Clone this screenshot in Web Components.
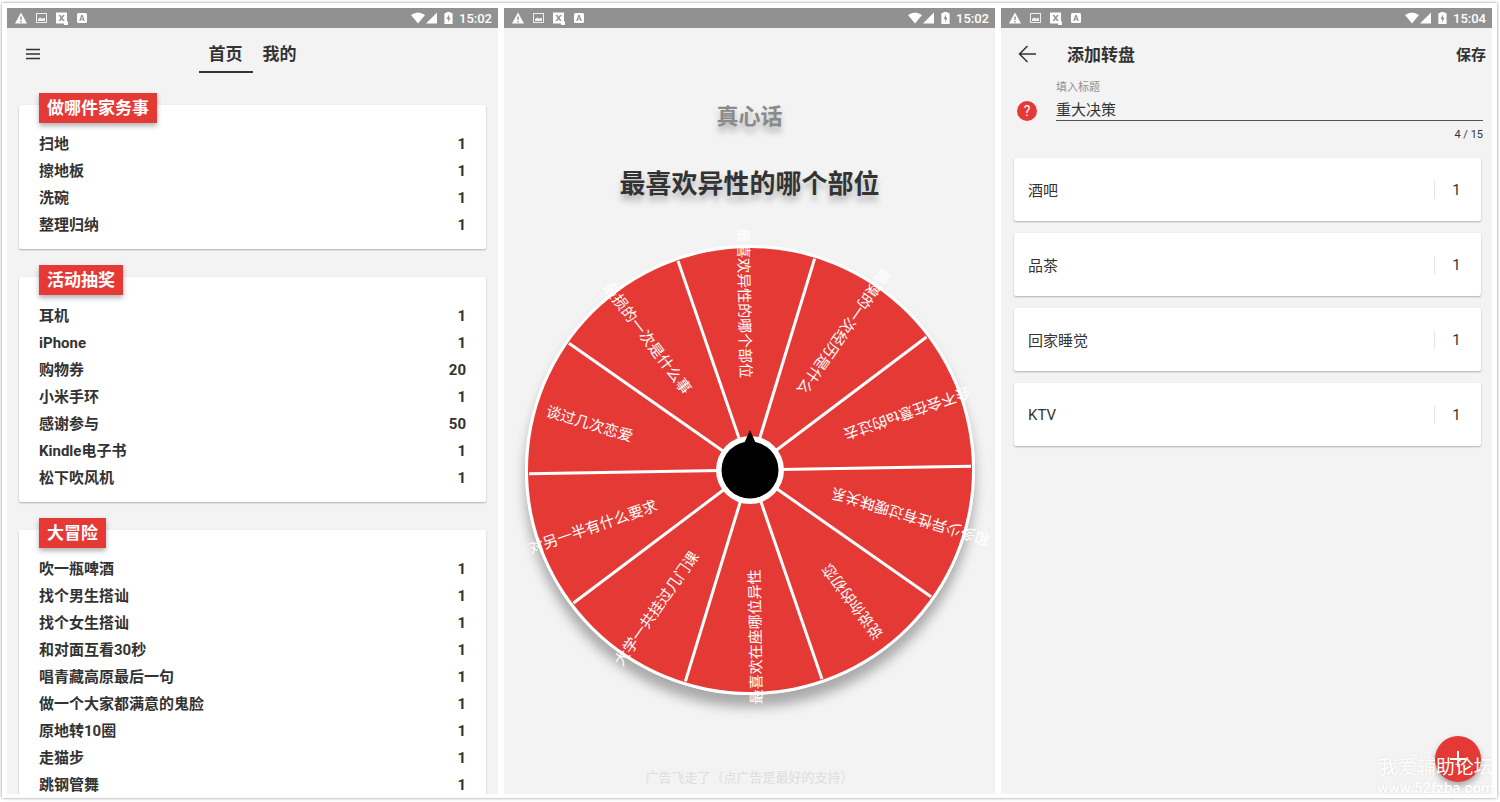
<!DOCTYPE html>
<html lang="zh-CN">
<head>
<meta charset="utf-8">
<title>转盘</title>
<style>
	html {
		height: 100%;
	}

	body {
		margin: 0;
		height: 100%;
		display: flex;
		background: #fff;
		color: #333;
		font-family: Roboto, "Noto Sans CJK SC", sans-serif;
		font-size: 15px;
		--red: #e53935;
		--surface: #f3f3f3;
	}
</style>
</head>
<body>

<template id="screen-board-template">
	<style>
		:host {
			flex: 1;
			display: grid;
			grid-template-columns: repeat(3, minmax(0, 1fr));
			grid-template-rows: minmax(0, 1fr);
			gap: 6px;
			margin: 3px 3px 4px 2px;
			padding: 5px 5px 4px;
			position: relative;
			background: #fff;
			box-shadow: 0 0 3px rgba(0, 0, 0, 0.45);
		}

		.stamp {
			position: absolute;
			right: 3px;
			bottom: 0;
			display: flex;
			flex-direction: column;
			align-items: center;
			color: #fff;
			text-shadow: 0 0 2px rgba(0, 0, 0, 0.1);
			pointer-events: none;
			font-size: 19px;
			line-height: 20px;
		}

		.stamp small {
			font-size: 15px;
			font-weight: 500;
		}
	</style>
	<slot></slot>
	<div class="stamp"><span>我爱辅助论坛</span><small>www.52fzba.com</small></div>
</template>

<template id="status-bar-template">
	<style>
		:host {
			display: flex;
			align-items: center;
			height: 20px;
			padding: 0 6px 0 8px;
			background: #919191;
			color: #fff;
			font-size: 13px;
			font-weight: 500;
			flex: none;
		}

		.notices {
			display: flex;
			align-items: center;
			gap: 9px;
			margin-right: auto;
		}

		.system {
			display: flex;
			align-items: center;
		}

		.battery {
			margin: 0 6px;
		}

		svg {
			display: block;
			fill: #fff;
		}
	</style>
	<div class="notices">
		<svg width="12" height="12" viewBox="0 0 12 12"><path fill-rule="evenodd" d="M6 .5 12 11.5H0zM5.3 4.5v3.6h1.4V4.5zm0 4.6v1.3h1.4V9.100z"/></svg>
		<svg width="11" height="12" viewBox="0 0 11 12"><path fill-rule="evenodd" d="M0 1h11v10H0zM1 2v8h9V2zM2 9V7l2-1.500 2 1 3-.5v3z" opacity=".85"/></svg>
		<svg width="12" height="13" viewBox="0 0 12 13"><path fill-rule="evenodd" d="M0 .5h11v9h1V13H8v-1.500H0zM2.500 3l2.200 3L2.500 9h1.800L5.600 7.200 7 9h1.800L6.500 6l2.300-3H7L5.600 4.800 4.300 3z"/></svg>
		<svg width="10" height="12" viewBox="0 0 10 12"><path fill-rule="evenodd" d="M1.500 1h7Q10 1 10 2.500v7Q10 11 8.500 11h-7Q0 11 0 9.500v-7Q0 1 1.500 1zM4.300 3 2.200 9h1.300l.4-1.200h2.200L6.500 9h1.300L5.700 3zm.7 1.500.7 2.200H4.300z"/></svg>
	</div>
	<div class="system">
		<svg width="14" height="12" viewBox="0 0 14 12"><path d="M7 11.500 0 3Q7-2 14 3z"/></svg>
		<svg width="13" height="12" viewBox="0 0 13 12"><path d="M1 11.500 12 .5v11z"/></svg>
		<svg class="battery" width="9" height="12" viewBox="0 0 9 12"><path fill-rule="evenodd" d="M2.500 0h4v1H8q.6 0 .6.6v9.800q0 .6-.6.600H1q-.6 0-.6-.6V1.600Q.4 1 1 1h1.500zM5 2.500 2.500 7h1.700v3.200L6.600 5.700H5z"/></svg>
		<time></time>
	</div>
</template>

<template id="phone-screen-template">
	<style>
		:host {
			display: flex;
			flex-direction: column;
			position: relative;
			overflow: hidden;
			background: var(--surface);
		}

		.body {
			flex: 1;
			min-height: 0;
			display: flex;
			flex-direction: column;
		}

		::slotted([slot="fab"]) {
			position: absolute;
			right: 11px;
			bottom: 12px;
		}
	</style>
	<status-bar></status-bar>
	<slot name="bar"></slot>
	<div class="body"><slot></slot></div>
	<slot name="fab"></slot>
</template>

<template id="home-bar-template">
	<style>
		:host {
			display: grid;
			grid-template-columns: 1fr auto 1fr;
			align-items: center;
			height: 52px;
			padding: 0 14px;
			flex: none;
		}

		button {
			border: 0;
			background: none;
			color: inherit;
			font: inherit;
			cursor: pointer;
		}

		.menu {
			justify-self: start;
			padding: 4px;
			display: flex;
		}

		nav {
			display: flex;
		}

		.tab {
			box-sizing: border-box;
			height: 38px;
			padding: 0 10px 4px;
			font-size: 17px;
			font-weight: 700;
			border-top: 2px solid transparent;
			border-bottom: 2px solid transparent;
		}

		.tab[aria-current] {
			border-bottom-color: #333;
		}
	</style>
	<button class="menu" aria-label="菜单">
		<svg width="16" height="16" viewBox="0 0 16 16" stroke="#333" stroke-width="1.500"><path d="M1 3.500h14M1 8h14M1 12.500h14"/></svg>
	</button>
	<nav>
		<button class="tab" aria-current="page">首页</button>
		<button class="tab">我的</button>
	</nav>
</template>

<template id="wheel-card-template">
	<style>
		:host {
			display: block;
			margin: 0 12px 28px;
			padding: 0 20px 10px;
			background: #fff;
			border-radius: 2px;
			box-shadow: 0 1px 2px rgba(0, 0, 0, 0.28);
		}

		h2 {
			width: fit-content;
			margin: 0 0 -4px;
			padding: 0 8px;
			/* the tag hangs over the card's upper edge */
			position: relative;
			top: -12px;
			background: var(--red);
			color: #fff;
			font-size: 17px;
			font-weight: 700;
			line-height: 30px;
			box-shadow: 0 3px 5px rgba(0, 0, 0, 0.3);
		}

		ul {
			list-style: none;
			margin: 0;
			padding: 0;
		}

		li {
			display: flex;
			justify-content: space-between;
			height: 27px;
			line-height: 27px;
			font-weight: 700;
		}
	</style>
	<h2><slot></slot></h2>
	<ul></ul>
</template>

<template id="spin-wheel-template">
	<style>
		:host {
			display: block;
			position: relative;
			width: 450px;
			height: 450px;
			border-radius: 50%;
			box-shadow: 0 12px 12px rgba(0, 0, 0, 0.3);
		}

		.disc {
			display: block;
			overflow: visible;
		}

		.disc text {
			fill: #fff;
			font-size: 15px;
			text-anchor: middle;
		}

		button {
			position: absolute;
			inset: 0;
			margin: auto;
			width: 68px;
			height: 68px;
			padding: 0;
			border: 0;
			border-radius: 50%;
			background: #fff;
			cursor: pointer;
		}

		button svg {
			display: block;
			overflow: visible;
		}
	</style>
	<svg class="disc" width="450" height="450" viewBox="-225 -225 450 450">
		<circle r="225" fill="#fff"/>
		<circle r="222" fill="#e53935"/>
		<g class="spokes" stroke="#fff" stroke-width="3"></g>
		<g class="labels"></g>
	</svg>
	<button aria-label="开始">
		<svg width="68" height="68" viewBox="-34 -34 68 68"><circle r="28.500"/><path d="M0-40 7-24H-7z"/></svg>
	</button>
</template>

<template id="spin-view-template">
	<style>
		:host {
			flex: 1;
			display: flex;
			flex-direction: column;
			align-items: center;
			padding: 74px 0 7px;
		}

		h2, h1, p {
			margin: 0;
		}

		h2 {
			color: #8a8a8a;
			font-size: 22px;
			font-weight: 700;
			line-height: 30px;
			text-shadow: 0 6px 6px rgba(0, 0, 0, 0.25);
		}

		h1 {
			margin: 34px 0 43px;
			font-size: 26px;
			font-weight: 700;
			line-height: 36px;
			text-shadow: 0 6px 6px rgba(0, 0, 0, 0.25);
		}

		p {
			margin-top: auto;
			color: #dedede;
			font-size: 13px;
			line-height: 18px;
		}
	</style>
	<h2><slot name="title"></slot></h2>
	<h1><slot name="result"></slot></h1>
	<slot></slot>
	<p><slot name="note"></slot></p>
</template>

<template id="edit-bar-template">
	<style>
		:host {
			box-sizing: border-box;
			display: flex;
			align-items: center;
			height: 52px;
			padding: 0 6px 2px 14px;
			flex: none;
		}

		h1 {
			margin: 0 auto 0 28px;
			font-size: 17px;
			font-weight: 700;
		}

		button {
			display: flex;
			padding: 0;
			border: 0;
			background: none;
			color: inherit;
			font: inherit;
			font-weight: 700;
			cursor: pointer;
		}
	</style>
	<button aria-label="返回">
		<svg width="24" height="24" viewBox="0 0 24 24" fill="none" stroke="#333" stroke-width="1.500"><path d="M21 13H5M12.500 5 4.500 13l8 8"/></svg>
	</button>
	<h1><slot></slot></h1>
	<button>保存</button>
</template>

<template id="title-field-template">
	<style>
		:host {
			display: grid;
			grid-template-columns: 20px minmax(0, 1fr);
			column-gap: 19px;
			padding: 0 9px 15px 16px;
		}

		label, output {
			grid-column: 2;
			font-size: 11px;
			line-height: 16px;
		}

		label {
			color: #8f8f8f;
		}

		.help {
			width: 20px;
			height: 20px;
			padding: 0;
			align-self: end;
			border: 0;
			border-radius: 50%;
			background: var(--red);
			color: #fff;
			font: 400 14px/20px Roboto, sans-serif;
			cursor: pointer;
		}

		input {
			box-sizing: border-box;
			width: 100%;
			height: 25px;
			padding: 0;
			border: 0;
			border-bottom: 1px solid #555;
			border-radius: 0;
			background: none;
			color: inherit;
			font: inherit;
			outline: 0;
		}

		output {
			margin-top: 6px;
			text-align: right;
		}
	</style>
	<label for="title"><slot></slot></label>
	<button class="help" aria-label="帮助">?</button>
	<input id="title" maxlength="15">
	<output for="title"></output>
</template>

<template id="option-row-template">
	<style>
		:host {
			display: flex;
			align-items: center;
			height: 63px;
			margin: 0 11px 12px 13px;
			padding: 0 3px 0 14px;
			background: #fff;
			border-radius: 2px;
			box-shadow: 0 1px 2px rgba(0, 0, 0, 0.28);
		}

		.name {
			flex: 1;
		}

		.weight {
			width: 43px;
			border-left: 1px solid #e4e4e4;
			line-height: 18px;
			text-align: center;
		}
	</style>
	<span class="name"><slot></slot></span>
	<span class="weight"></span>
</template>

<template id="add-button-template">
	<style>
		:host {
			display: block;
		}

		button {
			display: grid;
			place-items: center;
			width: 46px;
			height: 46px;
			padding: 0;
			border: 0;
			border-radius: 50%;
			background: var(--red);
			box-shadow: 0 4px 6px rgba(0, 0, 0, 0.3);
			cursor: pointer;
		}
	</style>
	<button aria-label="添加">
		<svg width="20" height="20" viewBox="0 0 20 20" stroke="#fff" stroke-width="2"><path d="M10 2v16M2 10h16"/></svg>
	</button>
</template>

<script>
	class TemplateElement extends HTMLElement {
		constructor() {
			super();
			this.attachShadow({mode: 'open'});
			const template = document.getElementById(this.localName + '-template').content;
			this.shadowRoot.appendChild(template.cloneNode(true));
		}

		$(selector) {
			return this.shadowRoot.querySelector(selector);
		}
	}

	class ScreenBoard extends TemplateElement {}
	class HomeBar extends TemplateElement {}
	class SpinView extends TemplateElement {}
	class EditBar extends TemplateElement {}
	class AddButton extends TemplateElement {}

	class StatusBar extends TemplateElement {
		static get observedAttributes() {
			return ['time'];
		}

		attributeChangedCallback(name, oldValue, newValue) {
			this.$('time').textContent = newValue;
		}
	}

	class PhoneScreen extends TemplateElement {
		connectedCallback() {
			this.$('status-bar').setAttribute('time', this.getAttribute('time'));
		}
	}

	class WheelCard extends TemplateElement {
		connectedCallback() {
			const list = this.$('ul');
			list.replaceChildren();
			// items look like "name:weight", the weight is 1 when left out
			for (const item of this.getAttribute('items').split(',')) {
				const [name, weight = '1'] = item.split(':');
				const row = document.createElement('li');
				for (const value of [name, weight]) {
					const cell = document.createElement('span');
					cell.textContent = value;
					row.appendChild(cell);
				}
				list.appendChild(row);
			}
		}
	}

	class SpinWheel extends TemplateElement {
		connectedCallback() {
			const items = this.getAttribute('items').split(',');
			const step = 360 / items.length;
			const turn = Number(this.getAttribute('turn') || 0);
			const spokes = this.$('.spokes');
			const labels = this.$('.labels');
			spokes.replaceChildren();
			labels.replaceChildren();
			items.forEach((item, i) => {
				const angle = turn + i * step;
				spokes.appendChild(this._svg('line', {x1: -30, x2: -221, transform: `rotate(${angle - step / 2})`}));
				const label = this._svg('text', {x: -167, y: 8, transform: `rotate(${angle})`});
				label.textContent = item;
				labels.appendChild(label);
			});
		}

		_svg(name, attributes) {
			const node = document.createElementNS('http://www.w3.org/2000/svg', name);
			for (const key in attributes) {
				node.setAttribute(key, attributes[key]);
			}
			return node;
		}
	}

	class TitleField extends TemplateElement {
		connectedCallback() {
			const input = this.$('input');
			input.value = this.getAttribute('value') || '';
			input.oninput = () => this._count();
			this._count();
		}

		_count() {
			const input = this.$('input');
			this.$('output').textContent = `${input.value.length} / ${input.maxLength}`;
		}
	}

	class OptionRow extends TemplateElement {
		connectedCallback() {
			this.$('.weight').textContent = this.getAttribute('weight') || '1';
		}
	}

	customElements.define('status-bar', StatusBar);
	customElements.define('screen-board', ScreenBoard);
	customElements.define('phone-screen', PhoneScreen);
	customElements.define('home-bar', HomeBar);
	customElements.define('wheel-card', WheelCard);
	customElements.define('spin-view', SpinView);
	customElements.define('spin-wheel', SpinWheel);
	customElements.define('edit-bar', EditBar);
	customElements.define('title-field', TitleField);
	customElements.define('option-row', OptionRow);
	customElements.define('add-button', AddButton);
</script>

<style>
	.cards {
		padding-top: 25px;
	}
</style>

<screen-board>
	<phone-screen time="15:02">
		<home-bar slot="bar"></home-bar>
		<div class="cards">
			<wheel-card items="扫地,擦地板,洗碗,整理归纳">做哪件家务事</wheel-card>
			<wheel-card items="耳机,iPhone,购物券:20,小米手环,感谢参与:50,Kindle电子书,松下吹风机">活动抽奖</wheel-card>
			<wheel-card items="吹一瓶啤酒,找个男生搭讪,找个女生搭讪,和对面互看30秒,唱青藏高原最后一句,做一个大家都满意的鬼脸,原地转10圈,走猫步,跳钢管舞">大冒险</wheel-card>
		</div>
	</phone-screen>

	<phone-screen time="15:02">
		<spin-view>
			<span slot="title">真心话</span>
			<span slot="result">最喜欢异性的哪个部位</span>
			<spin-wheel turn="17" items="谈过几次恋爱,最损的一次是什么事,最喜欢异性的哪个部位,最糗的一次经历是什么,会不会在意ta的过去,和多少异性有过暧昧关系,说说你的初恋,最喜欢在座哪位异性,大学一共挂过几门课,对另一半有什么要求"></spin-wheel>
			<span slot="note">广告飞走了（点广告是最好的支持）</span>
		</spin-view>
	</phone-screen>

	<phone-screen time="15:04">
		<edit-bar slot="bar">添加转盘</edit-bar>
		<title-field value="重大决策">填入标题</title-field>
		<option-row>酒吧</option-row>
		<option-row>品茶</option-row>
		<option-row>回家睡觉</option-row>
		<option-row>KTV</option-row>
		<add-button slot="fab"></add-button>
	</phone-screen>
</screen-board>

</body>
</html>
